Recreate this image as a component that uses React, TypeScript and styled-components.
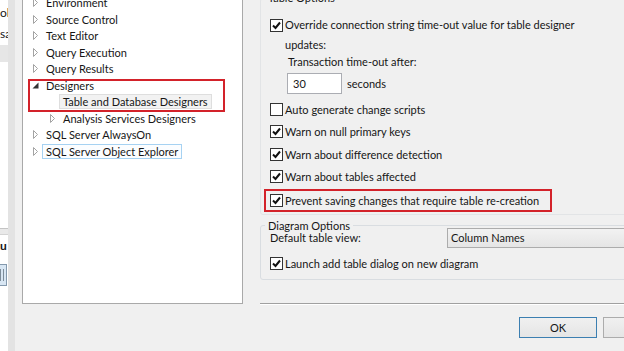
import * as React from "react"
import styled, { createGlobalStyle } from "styled-components"

const GlobalStyle = createGlobalStyle`
  html, body {
    margin: 0;
    padding: 0;
    background: #f0f0f0;
  }
  body {
    font-family: Lato, "Noto Sans", sans-serif;
    font-size: 11px;
    color: #161616;
  }
`

const Screen = styled.div`
  width: 624px;
  height: 351px;
  overflow: hidden;
  display: flex;
  background: #f0f0f0;
`

// strip of the window behind the dialog
const SideStrip = styled.div`
  width: 8px;
  flex: none;
  background: #fff;
  display: grid;
  grid-template-columns: 8px;
  grid-template-rows: 228px auto;
  overflow: hidden;
`
const SideList = styled.div`
  display: flex;
  flex-direction: column;
  padding-top: 2px;
  min-width: 0;
`
const SideItem = styled.div<{ $selected?: boolean; $bold?: boolean }>`
  height: ${p => (p.$selected ? "17px" : "21px")};
  margin-top: ${p => (p.$selected ? "1px" : "0")};
  display: flex;
  justify-content: flex-end;
  align-items: center;
  white-space: nowrap;
  direction: rtl;
  background: ${p => (p.$selected ? "#e6e6e6" : "transparent")};
  font-weight: ${p => (p.$bold ? 700 : 400)};
  font-size: 12px;
`
const SideBand = styled.div`
  height: 5px;
  border-top: 1px solid #c4c4c4;
  border-bottom: 1px solid #d4d4d4;
  background: #e9e9e9;
`
const SideTool = styled.div`
  margin-top: 8px;
  margin-left: -4px;
  width: 11px;
  height: 22px;
  box-sizing: border-box;
  border: 1px solid #8499ad;
  background: #d8e6f3;
  display: flex;
  justify-content: center;
  gap: 2px;
  padding: 4px 2px;
`
const ToolTick = styled.span`
  width: 1px;
  background: #7d8c99;
`

const Splitter = styled.div`
  width: 14px;
  flex: none;
  background: linear-gradient(to right, #e3e3e3 0 7px, #f0f0f0 7px);
`

// options tree
const TreeColumn = styled.div`
  width: 221px;
  flex: none;
`
const TreeBox = styled.div`
  position: relative;
  margin-top: -8px;
  height: 312px;
  box-sizing: border-box;
  border: 1px solid #a9a9a9;
  background: #fff;
  padding-top: 1.5px;
`
const TreeRow = styled.div<{ $level: number }>`
  height: 16.5px;
  display: flex;
  align-items: center;
  padding-left: ${p => 7 + p.$level * 17}px;
  white-space: nowrap;
`
const Expander = styled.span`
  width: 11px;
  flex: none;
  display: flex;
  justify-content: center;
  align-items: center;
`
const NodeLabel = styled.span<{ $state?: "selected" | "focused" }>`
  margin-left: 1px;
  padding: 0 3px;
  height: 15px;
  line-height: 13px;
  box-sizing: border-box;
  border: 1px solid
    ${p =>
      p.$state === "selected" ? "#dedede" : p.$state === "focused" ? "#a6d2f2" : "transparent"};
  background: ${p =>
    p.$state === "selected" ? "#f2f2f2" : p.$state === "focused" ? "#fbfdff" : "transparent"};
`
const TreeCallout = styled.div`
  position: absolute;
  left: 5px;
  top: 86px;
  width: 197px;
  height: 33px;
  box-sizing: border-box;
  border: 2px solid #d3222a;
  pointer-events: none;
`

// right side: options
const OptionsPane = styled.div`
  flex: none;
  width: 400px;
  padding-left: 17px;
  box-sizing: border-box;
  display: flex;
  flex-direction: column;
`
const GroupBox = styled.fieldset<{ $gap?: number; $faint?: boolean }>`
  margin: ${p => p.$gap ?? 0}px 0 0;
  min-width: 0;
  padding: 0;
  border: 1px solid ${p => (p.$faint ? "#e2e4e6" : "#d9dde1")};
  border-radius: 3px;
`
const GroupLegend = styled.legend`
  margin-left: 4px;
  padding: 0 3px;
  line-height: 14px;
`
const GroupBody = styled.div<{ $top: number; $bottom: number }>`
  padding: ${p => p.$top}px 0 ${p => p.$bottom}px 9px;
  display: flex;
  flex-direction: column;
`
const CheckRow = styled.div<{ $callout?: boolean }>`
  display: flex;
  align-items: center;
  gap: 2px;
  height: ${p => (p.$callout ? "23px" : "22.5px")};
  white-space: nowrap;
  ${p =>
    p.$callout &&
    `
    margin: 1px 0 0 -6px;
    width: fit-content;
    box-sizing: border-box;
    border: 2px solid #d3222a;
    padding: 0 11px 0 4px;
  `}
`
const WrapRow = styled.div`
  display: flex;
  align-items: flex-start;
  gap: 2px;
  line-height: 20px;
  & > span:first-child {
    margin-top: 3.5px;
  }
`
const Box = styled.span`
  width: 13px;
  height: 13px;
  flex: none;
  box-sizing: border-box;
  border: 1px solid #333;
  background: #fff;
  display: flex;
  align-items: center;
  justify-content: center;
`
const FieldLabel = styled.div`
  padding-left: 18px;
  line-height: 14px;
`
const InputRow = styled.div`
  display: flex;
  align-items: center;
  gap: 5px;
  padding-left: 17px;
  margin-top: 4px;
  margin-bottom: 3.75px;
`
const TextBox = styled.div`
  width: 55px;
  height: 21px;
  box-sizing: border-box;
  border: 1px solid #abadb3;
  background: #fff;
  padding-left: 5px;
  line-height: 19px;
`
const ViewRow = styled.div`
  display: grid;
  grid-template-columns: 177px 1fr;
  align-items: center;
  height: 20px;
  margin-top: -5px;
  margin-bottom: 6px;
`
const DropDown = styled.div`
  height: 20px;
  box-sizing: border-box;
  border: 1px solid #acacac;
  background: linear-gradient(#f2f2f2, #e5e5e5);
  padding-left: 3px;
  line-height: 18px;
`
const LaunchRow = styled(CheckRow)`
  height: 20px;
`
const Separator = styled.div`
  margin-top: 23px;
  height: 0;
  border-top: 1px solid #a0a0a0;
  border-bottom: 1px solid #fff;
`
const ButtonRow = styled.div`
  display: flex;
  gap: 6px;
  margin-top: 12px;
  padding-left: 259px;
`
const Button = styled.div<{ $default?: boolean }>`
  width: 78px;
  height: 21px;
  flex: none;
  box-sizing: border-box;
  border: 1px solid ${p => (p.$default ? "#3c7fb1" : "#acacac")};
  background: linear-gradient(#f0f0f0, #e5e5e5);
  text-align: center;
  line-height: 19px;
`

const Arrow: React.FC<{ open?: boolean }> = ({ open }) =>
  open ? (
    <svg width="7" height="7" viewBox="0 0 7 7">
      <polygon points="6.5,0.5 6.5,6.5 0.5,6.5" fill="#333" />
    </svg>
  ) : (
    <svg width="6" height="9" viewBox="0 0 6 9">
      <polygon points="0.5,0.5 4.5,4.5 0.5,8.5" fill="#fff" stroke="#a3a3a3" strokeWidth="1" />
    </svg>
  )

const Check: React.FC<{ on?: boolean }> = ({ on }) => (
  <Box>
    {on && (
      <svg width="9" height="9" viewBox="0 0 9 9">
        <polyline points="1,4.5 3.5,7 8,1.5" fill="none" stroke="#111" strokeWidth="2" />
      </svg>
    )}
  </Box>
)

const treeNodes: { label: string; level: number; arrow?: "open" | "closed"; state?: "selected" | "focused" }[] = [
  { label: "Environment", level: 0, arrow: "closed" },
  { label: "Source Control", level: 0, arrow: "closed" },
  { label: "Text Editor", level: 0, arrow: "closed" },
  { label: "Query Execution", level: 0, arrow: "closed" },
  { label: "Query Results", level: 0, arrow: "closed" },
  { label: "Designers", level: 0, arrow: "open" },
  { label: "Table and Database Designers", level: 1, state: "selected" },
  { label: "Analysis Services Designers", level: 1, arrow: "closed" },
  { label: "SQL Server AlwaysOn", level: 0, arrow: "closed" },
  { label: "SQL Server Object Explorer", level: 0, arrow: "closed", state: "focused" },
]

const tableChecks = [
  { label: "Auto generate change scripts", on: false },
  { label: "Warn on null primary keys", on: true },
  { label: "Warn about difference detection", on: true },
  { label: "Warn about tables affected", on: true },
]

export default function App() {
  return (
    <>
      <GlobalStyle />
      <Screen>
        <SideStrip>
          <SideList>
            <SideItem>ol</SideItem>
            <SideItem>sa</SideItem>
            <SideItem $selected />
          </SideList>
          <div>
            <SideBand />
            <SideItem $bold>u</SideItem>
            <SideTool>
              <ToolTick />
              <ToolTick />
            </SideTool>
          </div>
        </SideStrip>
        <Splitter />
        <TreeColumn>
          <TreeBox>
            {treeNodes.map(n => (
              <TreeRow key={n.label} $level={n.level}>
                <Expander>{n.arrow && <Arrow open={n.arrow === "open"} />}</Expander>
                <NodeLabel $state={n.state}>{n.label}</NodeLabel>
              </TreeRow>
            ))}
            <TreeCallout />
          </TreeBox>
        </TreeColumn>
        <OptionsPane>
          <GroupBox $gap={-9} $faint>
            <GroupLegend>Table Options</GroupLegend>
            <GroupBody $top={10} $bottom={2}>
              <WrapRow>
                <Check on />
                <div>
                  Override connection string time-out value for table designer
                  <br />
                  updates:
                </div>
              </WrapRow>
              <FieldLabel>Transaction time-out after:</FieldLabel>
              <InputRow>
                <TextBox>30</TextBox>
                <span>seconds</span>
              </InputRow>
              {tableChecks.map(c => (
                <CheckRow key={c.label}>
                  <Check on={c.on} />
                  <span>{c.label}</span>
                </CheckRow>
              ))}
              <CheckRow $callout>
                <Check on />
                <span>Prevent saving changes that require table re-creation</span>
              </CheckRow>
            </GroupBody>
          </GroupBox>
          <GroupBox $gap={4}>
            <GroupLegend>Diagram Options</GroupLegend>
            <GroupBody $top={0} $bottom={5}>
              <ViewRow>
                <span>Default table view:</span>
                <DropDown>Column Names</DropDown>
              </ViewRow>
              <LaunchRow>
                <Check on />
                <span>Launch add table dialog on new diagram</span>
              </LaunchRow>
            </GroupBody>
          </GroupBox>
          <Separator />
          <ButtonRow>
            <Button $default>OK</Button>
            <Button>Cancel</Button>
          </ButtonRow>
        </OptionsPane>
      </Screen>
    </>
  )
}
